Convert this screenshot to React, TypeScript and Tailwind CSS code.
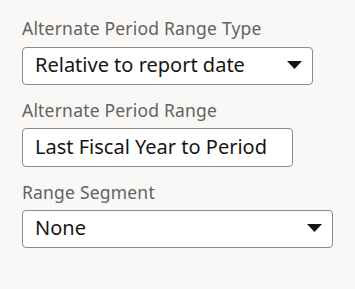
import { useState } from 'react'

function Caret() {
  return (
    <svg className="w-[15px] h-[8px] shrink-0" viewBox="0 0 15 8" fill="#161513">
      <path d="M0 0h15L7.5 8z" />
    </svg>
  )
}

const labelCls = "block text-[17.5px] leading-[22px] tracking-[0.2px] text-[#646260]"
const boxCls = "flex items-center justify-between pl-[12px] pr-[10px] pb-[3px] bg-white border border-[#8c8b89] rounded-[4px] text-[20px] leading-[28px] text-[#161513]"

export default function App() {
  const [range, setRange] = useState('Last Fiscal Year to Period')

  return (
    <div className="w-[355px] h-[289px] bg-[#f9f8f6] pl-[22px] pt-[17px] font-['Noto_Sans',sans-serif]">
      <label className={labelCls}>Alternate Period Range Type</label>
      <div className={`mt-[8px] w-[291px] h-[38px] ${boxCls}`}>
        <span>Relative to report date</span>
        <Caret />
      </div>

      <label className={`mt-[14px] ${labelCls}`}>Alternate Period Range</label>
      <input
        value={range}
        onChange={e => setRange(e.target.value)}
        className="block mt-[7px] w-[271px] h-[39px] pl-[12px] pr-[10px] pb-[3px] bg-white border border-[#8c8b89] rounded-[4px] text-[20px] leading-[28px] text-[#161513] outline-none font-['Noto_Sans',sans-serif]"
      />

      <label className={`mt-[14px] ${labelCls}`}>Range Segment</label>
      <div className={`mt-[7px] w-[311px] h-[38px] ${boxCls}`}>
        <span>None</span>
        <Caret />
      </div>
    </div>
  )
}
